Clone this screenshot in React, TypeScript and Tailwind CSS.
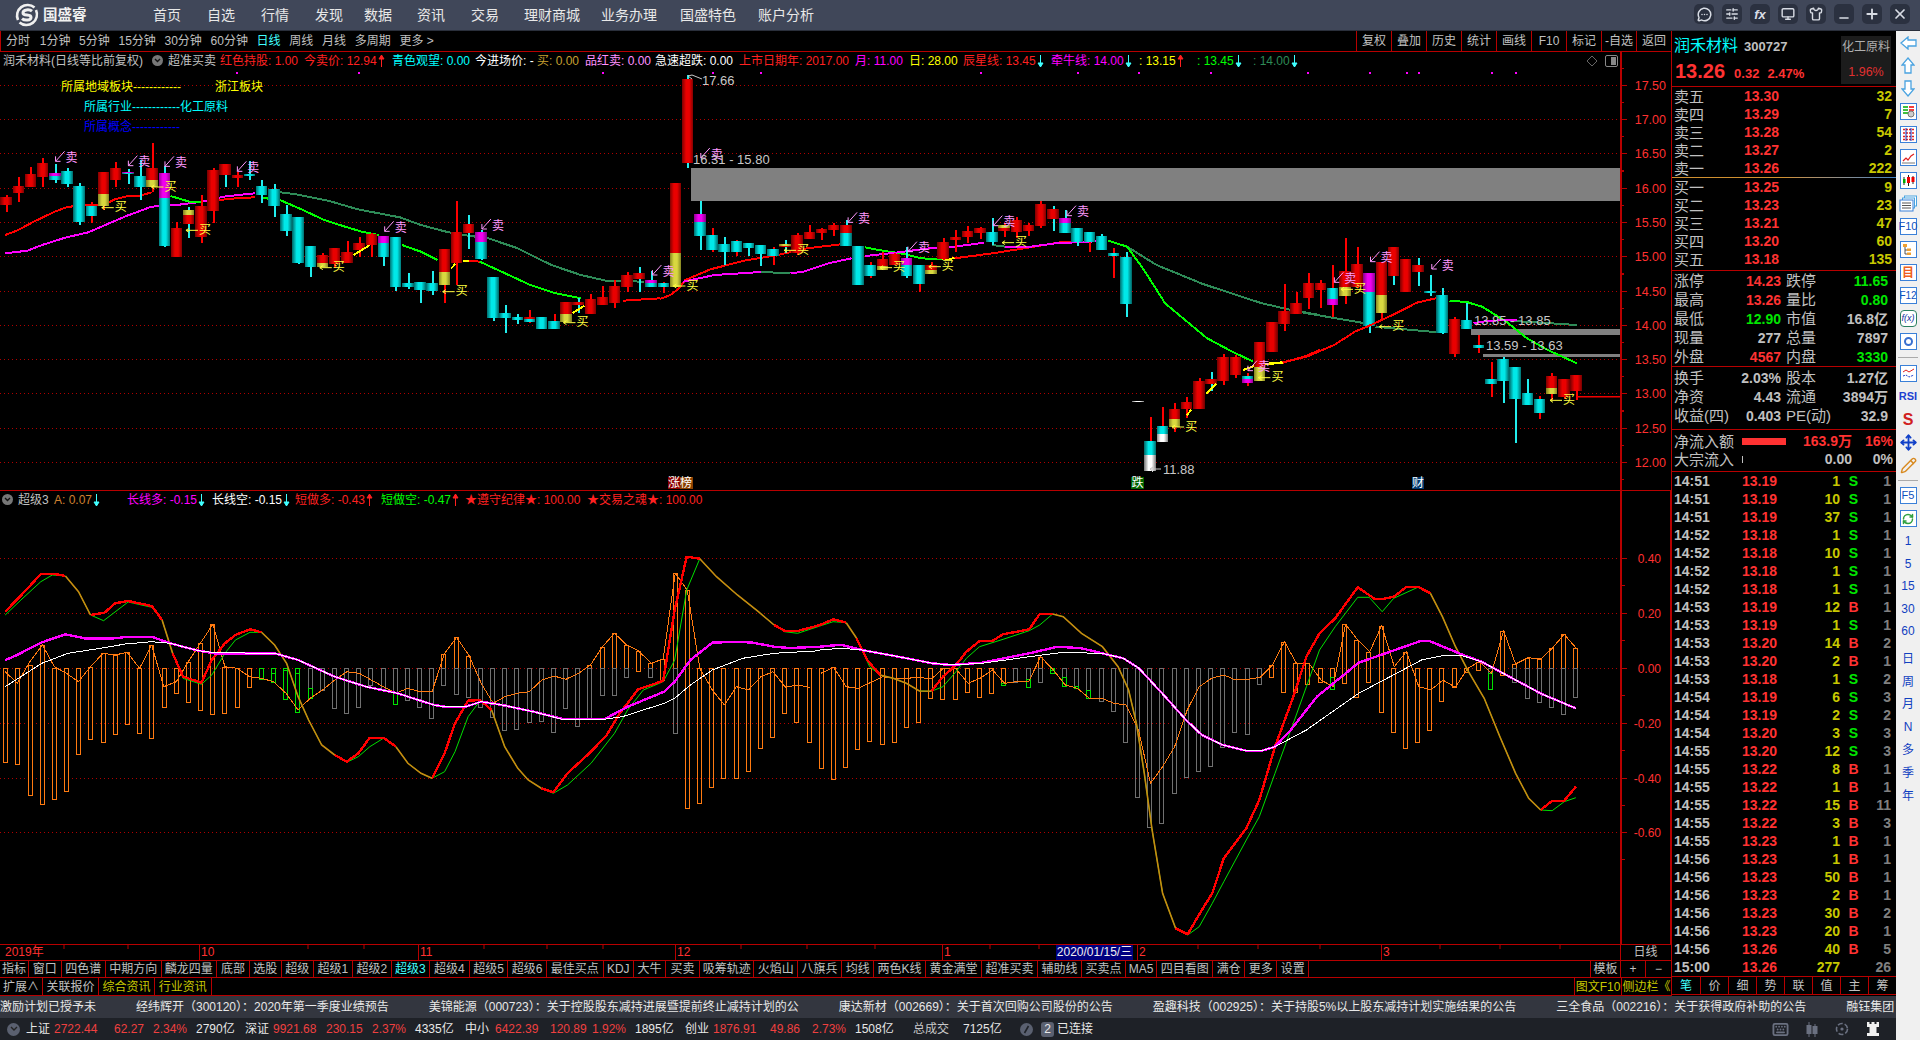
import React from "react";
import { Minus, Plus, X, SlidersHorizontal, Monitor, Shirt, Move, Pencil, RefreshCw, MessageCircleMore, Keyboard } from "lucide-react";

type P = [number, number];
const z8 = (p: P): P => [p[0] / 2.376, 130 + p[1] / 3];
const z9 = (p: P): P => [660 + p[0] / 2.376, 130 + p[1] / 3];
const z10 = (p: P): P => [1100 + p[0] / 2.904, 200 + p[1] / 3];
const z11 = (p: P): P => [p[0] / 1.912, 490 + p[1] / 3];
const z12 = (p: P): P => [820 + p[0] / 1.912, 490 + p[1] / 3];
const pts = (a: P[], f: (p: P) => P) => a.map((p) => f(p).map((v) => v.toFixed(1)).join(",")).join(" ");

type C = [number, number, number, number, string, string?, number?, string?];
const candlesA: C[] = [
  [195,200,225,245,"r"],[140,168,188,215,"r"],[110,132,172,172,"r"],[85,100,140,170,"r"],[102,128,150,160,"m","c",138,"c"],
  [115,122,162,170,"c"],[160,168,276,286,"c"],[215,227,258,278,"c","c",0,"r"],[127,127,228,240,"r","y",192],[97,115,150,170,"r"],
  [117,126,131,162,"m","c",128,"c"],[90,138,172,210,"c"],[40,115,172,185,"r","y",150],[108,128,348,350,"m","c",203,"c"],[275,295,380,380,"r"],
  [232,240,282,325,"y","r",255,"c"],[195,228,320,340,"r"],[115,120,242,280,"r"],[102,102,135,170,"r","r",0,"c"],[125,134,143,170,"r"],
  [93,132,137,150,"c"],[150,167,195,220,"c"],[162,177,228,262,"c"],[225,252,302,317,"c"],[262,262,398,403,"c"],
  [348,348,410,442,"c"],[368,375,412,412,"r","y",398],[355,355,402,415,"r"],[333,367,400,400,"r"],[322,340,360,382,"r"],
  [310,312,345,380,"r"],[318,318,380,408,"m","c",340,"c"],[322,322,470,482,"c"],[430,460,470,476,"c"],[455,456,480,518,"c"],
  [424,460,483,496,"c"],[358,358,465,518,"r","y",426],[213,305,400,465,"r"],[255,282,310,358,"r","r",0,"c"],[300,306,387,390,"m","c",335,"c"],
  [441,441,565,572,"c"],[525,550,563,610,"c"],[552,561,570,582,"c"],[540,562,575,578,"r","c",568,"r"],[561,561,596,596,"c"],
  [552,572,596,596,"c","c",0,"r"],[515,515,575,575,"r","y",552],[505,517,525,550,"r","r",0,"c"],[492,508,552,552,"r"],[468,502,525,525,"r"],
  [450,467,518,535,"r"],[425,434,470,486,"r"],[410,430,446,486,"r","r",0,"c"],[422,450,470,470,"m","c",460,"c"],[455,460,470,490,"c","c",0,"r"],
  [160,160,472,472,"r","y",370],[-165,-153,98,113,"r","r",0,"c"],[213,252,318,360,"m","c",275,"c"],[295,316,360,365,"c","c",0,"r"],[322,342,365,406,"c"],
  [330,332,365,378,"c","c",0,"r"],[340,340,354,378,"c"],[345,345,372,407,"c"],[350,356,378,405,"c","c",0,"r"],[330,342,352,370,"y","r",347,"c"],
  [310,316,368,375,"r"],[285,305,328,328,"r"],[295,298,310,330,"r"],[280,284,300,317,"r"],[270,285,348,348,"r","c",310,"c"],
  [348,348,465,465,"c"],[395,405,438,445,"c","c",0,"r"],[365,388,420,420,"r","y",407],[370,372,405,405,"r"],[350,385,438,443,"m","c",405,"c"],
  [404,404,462,485,"c","c",0,"r"],[397,404,432,432,"r","y",420],[325,337,388,390,"r"],[300,322,330,365,"r"],[287,303,322,340,"r"],
  [290,294,310,328,"r"],[265,306,337,345,"c"],[280,285,302,320,"y","r",295,"r"],[260,270,305,325,"r"],[280,285,303,318,"r"],
  [213,223,288,295,"r"],[228,238,266,302,"r","r",0,"c"],[240,264,308,308,"m","c",280,"c"],[294,294,336,347,"c"],[307,307,336,365,"c","c",0,"r"],
  [312,318,360,360,"c"],[355,370,378,443,"c","c",0,"r"],[365,380,522,562,"c"],[812,812,815,815,"w"],[860,932,1022,1022,"c","w",976,"r"],
  [830,887,936,936,"c","w",912,"r"],[820,838,890,905,"r","y",868,"r"],[800,815,838,865,"r"],[745,752,838,838,"r"],[725,748,762,782,"r","r",0,"c"],
  [672,680,752,765,"r"],[675,680,735,745,"r"],[730,737,758,768,"c","m",748,"r"],[637,637,752,752,"r","y",712],[576,576,666,666,"r"],
  [462,542,582,602,"r"],[485,518,552,552,"r"],[430,460,505,538,"r"],
];
const candlesB: C[] = [
  [240,250,270,325,"r"],[195,263,315,352,"c","m",297,"r"],[115,212,287,313,"r","y",262],[142,193,262,265,"r"],[220,220,378,400,"m","c",275,"c"],
  [185,185,338,358,"r","y",285],[142,142,228,254,"r","r",0,"c"],[176,176,275,275,"r"],[175,196,215,258,"r","r",0,"c"],[225,273,277,288,"c"],
  [265,286,398,403,"c"],[352,356,462,470,"r"],[305,360,386,387,"c"],[405,435,443,460,"c","c",0,"r"],[487,537,551,590,"c","c",0,"r"],
  [472,478,542,608,"c"],[502,502,596,728,"c"],[538,580,614,614,"c"],[587,597,640,658,"c","c",0,"r"],[520,527,582,600,"r","y",564],
  [537,537,592,596,"r"],[526,526,572,600,"r"],
];
const WICK: Record<string, string> = { r: "#f00", c: "#2ee", m: "#2ee", y: "#f00", w: "#ddd" };

function Candles() {
  const all = [...candlesA.map((c) => ({ c, off: 130 })), ...candlesB.map((c) => ({ c, off: 200 }))];
  return (
    <g>
      {all.map(({ c, off }, i) => {
        const [wt, bt, bb, wb, top, bot, split, wick] = c;
        const x = 5.9 + 12.17 * i;
        const y = (z: number) => off + z / 3;
        const mid = bot && split ? split : bb;
        const wc = WICK[wick || top];
        return (
          <g key={i} shapeRendering="crispEdges">
            <rect x={Math.round(x)} y={y(wt)} width={1.5} height={(wb - wt) / 3} fill={wc} />
            <rect x={x - 5.5} y={y(bt)} width={11.5} height={Math.max(1.5, (mid - bt) / 3)} fill={`url(#g${top})`} />
            {bot && split ? <rect x={x - 5.5} y={y(split)} width={11.5} height={(bb - split) / 3} fill={`url(#g${bot})`} /> : null}
          </g>
        );
      })}
    </g>
  );
}

const L = ({ a, f, c, w = 2 }: { a: P[]; f: (p: P) => P; c: string; w?: number }) => (
  <polyline points={pts(a, f)} fill="none" stroke={c} strokeWidth={w} strokeLinejoin="round" shapeRendering="crispEdges" />
);

// The red line runs thick where it leaves the green one; where the two coincide it shows as one thin olive-orange stroke.
function RedGreen({ red, green, f }: { red: P[]; green: P[]; f: (p: P) => P }) {
  const same = new Set(green.map((p) => p.join(",")));
  const isBoth = (a: P, b: P) => same.has(a.join(",")) && same.has(b.join(","));
  const thick: P[][] = [];
  const thin: P[][] = [];
  let cur: P[] = [];
  let curThin: P[] = [];
  for (let i = 0; i < red.length - 1; i++) {
    if (!isBoth(red[i], red[i + 1])) {
      if (!cur.length) cur.push(red[i]);
      cur.push(red[i + 1]);
      if (curThin.length) { thin.push(curThin); curThin = []; }
    } else {
      if (!curThin.length) curThin.push(red[i]);
      curThin.push(red[i + 1]);
      if (cur.length) { thick.push(cur); cur = []; }
    }
  }
  if (cur.length) thick.push(cur);
  if (curThin.length) thin.push(curThin);
  return (
    <g>
      <polyline points={pts(green, f)} fill="none" stroke="#00e000" strokeWidth={1} />
      {thick.map((a, i) => (
        <L key={i} a={a} f={f} c="#ff0000" w={2.4} />
      ))}
      {thin.map((a, i) => (
        <polyline key={i} points={pts(a, f)} fill="none" stroke="#c88a10" strokeWidth={1.6} />
      ))}
    </g>
  );
}

const FONT = "'Liberation Sans','Noto Sans CJK SC',sans-serif";

const sellA: P[] = [[170,82],[343,95],[430,97],[602,112],[952,292],[1183,285]];
const sellB: P[] = [[20,423],[135,72],[485,265],[627,353],[830,275],[1005,245],[1435,710]];
const sellC: P[] = [[727,235],[832,173],[1010,195]];
const buyA: P[] = [[287,230],[405,168],[487,298],[805,410],[1097,482],[1384,575]];
const buyB: P[] = [[77,465],[340,358],[568,410],[684,407],[858,335],[1262,888],[1467,740]];
const buyC: P[] = [[755,265],[866,377],[1362,598]];

const Sell = ({ p }: { p: P }) => (
  <g>
    <path d={`M${p[0] - 7} ${p[1] - 6}L${p[0] - 16} ${p[1] + 4}M${p[0] - 16} ${p[1] + 4}h5M${p[0] - 16} ${p[1] + 4}v-5`} stroke="#ff99ff" fill="none" />
    <text x={p[0]} y={p[1] + 4.5} fontSize={12} textAnchor="middle" fill="#ff99ff">卖</text>
  </g>
);
const Buy = ({ p }: { p: P }) => (
  <g>
    <path d={`M${p[0] - 19} ${p[1] + 1}H${p[0] - 7}M${p[0] - 19} ${p[1] + 1}l3 -2M${p[0] - 19} ${p[1] + 1}l3 2`} stroke="#ffff40" fill="none" />
    <text x={p[0]} y={p[1] + 4.5} fontSize={12} textAnchor="middle" fill="#ffff40">买</text>
  </g>
);

const mainGrid = [85.5, 119.5, 153.5, 188.5, 222.5, 256.5, 291.5, 325.5, 359.5, 393.5, 428.5, 462.5];
const mainLabels = ["17.50", "17.00", "16.50", "16.00", "15.50", "15.00", "14.50", "14.00", "13.50", "13.00", "12.50", "12.00"];

const dots = [236, 358, 602, 712, 760, 980, 1077, 1138, 1210, 1307, 1369, 1406, 1418, 1491, 1515];

function MainChart() {
  return (
    <svg width={1671} height={438} viewBox="0 52 1671 438" className="block" style={{ fontFamily: FONT }}>
      <defs>
        {[["r", "#7a0000", "#ea0000"], ["c", "#006f6f", "#00e8e8"], ["m", "#900090", "#f000f0"], ["y", "#808020", "#d8d840"], ["w", "#808080", "#ffffff"]].map(([k, e, m]) => (
          <linearGradient key={k} id={`g${k}`} x1="0" x2="1" y1="0" y2="0">
            <stop offset="0" stopColor={e} />
            <stop offset="0.36" stopColor={m} />
            <stop offset="0.64" stopColor={m} />
            <stop offset="1" stopColor={e} />
          </linearGradient>
        ))}
      </defs>
      {mainGrid.map((y) => (
        <line key={y} x1={0} x2={1620} y1={y} y2={y} stroke="#b00000" strokeDasharray="1 3" />
      ))}
      {dots.map((x) => (
        <rect key={x} x={x} y={72} width={2} height={2} fill="#ff00ff" />
      ))}
      <rect x={691} y={168} width={929} height={33} fill="#808080" />
      <rect x={1471} y={329} width={149} height={6} fill="#808080" />
      <rect x={1483} y={354} width={137} height={3} fill="#808080" />
      <L f={z9} c="#2e8b57" a={[[1065,332],[1110,350],[1180,405],[1290,462],[1430,520],[1500,540],[1568,555]]} />
      <L f={z8} c="#2e8b57" a={[[665,187],[700,192],[780,212],[850,238],[950,262],[1000,285],[1060,305],[1100,315],[1160,325],[1230,355],[1310,405],[1380,435],[1440,452],[1530,455]]} />
      <L f={z10} c="#2e8b57" a={[[590,338],[770,370]]} />
      <L f={z10} c="#2e8b57" a={[[800,380],[980,397]]} />
      <L f={z10} c="#2e8b57" a={[[1190,362],[1385,375]]} />
      <L f={z8} c="#ff0000" a={[[12,315],[40,302],[80,275],[130,245],[160,231],[200,225],[245,225],[275,207],[305,198],[330,198],[360,187]]} />
      <L f={z8} c="#ff00ff" a={[[12,370],[65,362],[100,345],[155,323],[210,307],[250,285],[300,258],[360,230],[420,225],[480,215],[530,200],[605,190]]} />
      <L f={z8} c="#ff0000" a={[[520,210],[560,205],[605,202]]} />
      <L f={z8} c="#00ff00" a={[[405,198],[450,215],[480,215]]} />
      <L f={z8} c="#00ff00" a={[[620,203],[665,210],[720,240],[770,270],[820,290],[860,305],[900,315]]} />
      <L f={z8} c="#00ff00" a={[[955,345],[1000,365],[1040,390]]} />
      <L f={z8} c="#ffff00" a={[[1100,392],[1115,392]]} />
      <L f={z8} c="#ff0000" a={[[1115,392],[1140,395]]} />
      <L f={z8} c="#00ff00" a={[[1140,395],[1200,430],[1260,465],[1320,490],[1380,505]]} />
      <L f={z8} c="#ff0000" a={[[1480,512],[1568,505]]} />
      <L f={z9} c="#ff0000" a={[[0,507],[25,495],[45,475],[60,450],[120,418],[200,392],[280,375],[350,355],[430,343]]} />
      <L f={z9} c="#ff00ff" a={[[55,455],[130,435],[240,426]]} />
      <L f={z9} c="#2e8b57" a={[[240,426],[310,430]]} />
      <L f={z9} c="#ff00ff" a={[[310,430],[340,425],[400,400],[455,385]]} />
      <L f={z9} c="#00ff00" a={[[487,352],[520,360],[580,372],[620,385],[670,388]]} />
      <L f={z9} c="#ffff00" a={[[670,388],[700,385]]} />
      <L f={z9} c="#ff0000" a={[[700,385],[800,368],[880,352],[960,335],[1000,335]]} />
      <L f={z9} c="#ff00ff" a={[[487,378],[560,368],[640,355],[700,350],[770,338]]} />
      <L f={z9} c="#2e8b57" a={[[790,345],[820,350]]} />
      <L f={z9} c="#ff00ff" a={[[820,350],[880,350],[940,340],[1050,333]]} />
      <L f={z9} c="#00ff00" a={[[1065,332],[1110,350],[1150,420],[1200,520],[1300,625],[1360,665],[1410,695]]} />
      <L f={z9} c="#ffff00" a={[[1385,720],[1420,705],[1480,698]]} />
      <L f={z9} c="#ff0000" a={[[1480,698],[1530,680],[1568,660]]} />
      <Candles />
      <L f={z10} c="#ffff00" a={[[490,490],[530,487]]} />
      <L f={z10} c="#ff0000" a={[[530,487],[600,470],[680,435],[740,395],[780,378],[860,340],[920,308],[975,295]]} />
      <L f={z10} c="#00ff00" a={[[1015,302],[1065,306],[1110,320],[1180,365],[1240,415],[1300,450],[1385,490]]} />
      <L f={z10} c="#ff00ff" a={[[1085,370],[1130,362],[1210,360]]} />
      <L f={z8} c="#ffff00" a={[[840,375],[878,346]]} />
      <L f={z8} c="#ffff00" a={[[1072,415],[1082,402]]} />
      <L f={z8} c="#ffff00" a={[[1360,550],[1388,527]]} />
      <L f={z9} c="#ffff00" a={[[1298,792],[1322,762]]} />
      <L f={z9} c="#ffff00" a={[[1252,855],[1262,840]]} />
      <rect x={1577} y={396} width={43} height={1.5} fill="#f00000" />
      {sellA.map((p, i) => <Sell key={i} p={z8(p)} />)}
      {sellB.map((p, i) => <Sell key={i} p={z9(p)} />)}
      {sellC.map((p, i) => <Sell key={i} p={z10(p)} />)}
      {buyA.map((p, i) => <Buy key={i} p={z8(p)} />)}
      {buyB.map((p, i) => <Buy key={i} p={z9(p)} />)}
      {buyC.map((p, i) => <Buy key={i} p={z10(p)} />)}
      <g fill="#c8c8c8" fontSize={13}>
        <path d="M688 76l4 -1l10 4M688 76l4 3" stroke="#c8c8c8" fill="none" />
        <text x={702} y={84.5}>17.66</text>
        <text x={693} y={164}>16.31 - 15.80</text>
        <text x={1474} y={325}>13.85 - 13.85</text>
        <text x={1486} y={350}>13.59 - 13.63</text>
        <path d="M1150 469h11M1150 469l3 -2M1150 469l3 3" stroke="#c8c8c8" fill="none" />
        <text x={1163} y={474}>11.88</text>
      </g>
      <rect x={668} y={477} width={12} height={12} fill="#8b0000" />
      <rect x={680} y={477} width={13} height={12} fill="#8b4000" />
      <text x={668} y={487} fontSize={12} fill="#fff">涨榜</text>
      <rect x={1131} y={477} width={13} height={12} fill="#006400" />
      <text x={1131.5} y={487} fontSize={12} fill="#fff">跌</text>
      <rect x={1412} y={477} width={12} height={12} fill="#003a70" />
      <text x={1412} y={487} fontSize={12} fill="#fff">财</text>
      <g stroke="#b80000" shapeRendering="crispEdges">
        <rect x={1620} y={52} width={1.5} height={438} fill="#b80000" stroke="none" />
        {mainGrid.map((y) => (
          <g key={y}>
            <line x1={1621} x2={1627} y1={y} y2={y} />
            <line x1={1621} x2={1624} y1={y + 17} y2={y + 17} />
            <line x1={1621} x2={1624} y1={y - 17} y2={y - 17} />
          </g>
        ))}
      </g>
      {mainLabels.map((t, i) => (
        <text key={t} x={1666} y={mainGrid[i] + 4.5} textAnchor="end" fontSize={12.5} fill="#ff3030">{t}</text>
      ))}
      <path d="M1592 56l5 5l-5 5l-5 -5z" fill="none" stroke="#666" />
      <rect x={1605.5} y={55.5} width={12} height={11} rx={1.5} fill="none" stroke="#888" />
      <rect x={1611} y={57} width={5} height={8} fill="#888" />
    </svg>
  );
}

const red1: P[] = [[10,365],[50,300],[78,252],[105,252],[125,258],[150,305],[173,375],[200,368],[220,340],[245,333],[290,348],[310,390],[330,490],[350,560],[385,578],[405,510],[430,460],[450,435],[478,418],[500,427],[525,465],[548,520],[570,620],[590,690],[615,765],[640,795],[663,815],[685,790],[707,743],[733,743],[757,770],[780,820],[805,850],[826,865],[850,790],[870,700],[895,632],[918,630],[940,660],[965,770],[990,835],[1010,870],[1035,895],[1058,907],[1085,850],[1130,785],[1160,735],[1185,670],[1220,598],[1245,585],[1268,572],[1290,360],[1313,200],[1338,206],[1370,260],[1410,315],[1450,365],[1480,405],[1500,422],[1525,423],[1568,405]];
const green1: P[] = [[10,375],[40,330],[78,275],[100,255],[125,258],[150,305],[173,375],[198,392],[245,336],[290,352],[310,390],[330,490],[350,565],[385,583],[405,555],[430,490],[450,450],[478,427],[500,427],[525,465],[548,520],[570,620],[590,690],[615,765],[640,795],[663,817],[685,800],[707,770],[733,745],[757,770],[780,820],[805,850],[826,865],[850,845],[870,785],[895,680],[918,632],[940,660],[965,770],[990,835],[1010,870],[1035,895],[1058,910],[1085,885],[1130,820],[1175,730],[1200,660],[1230,600],[1268,575],[1290,510],[1313,300],[1338,206],[1370,260],[1410,315],[1450,365],[1480,405],[1500,425],[1525,430],[1568,408]];
const red2: P[] = [[0,405],[25,388],[50,398],[70,445],[90,510],[115,555],[140,565],[165,580],[190,603],[213,604],[235,560],[260,525],[280,485],[305,453],[330,452],[350,433],[400,418],[420,372],[445,372],[465,380],[500,430],[540,470],[570,530],[590,600],[605,700],[620,850],[635,1020],[655,1210],[680,1315],[703,1333],[730,1260],[750,1210],[772,1105],[815,1015],[840,930],[870,770],[905,620],[930,500],[955,430],[985,385],[1028,292],[1060,326],[1075,327],[1097,320],[1122,290],[1143,290],[1167,310],[1190,380],[1215,470],[1240,545],[1270,625],[1300,740],[1330,850],[1355,925],[1378,960],[1400,932],[1423,932],[1445,890]];
const green2: P[] = [[0,408],[25,395],[50,398],[70,445],[95,530],[115,555],[140,565],[165,580],[190,603],[213,604],[235,590],[260,545],[280,505],[305,470],[350,448],[400,422],[420,405],[445,372],[465,380],[500,430],[540,470],[570,530],[590,600],[605,700],[620,850],[635,1020],[655,1210],[680,1315],[703,1335],[725,1310],[750,1240],[772,1175],[815,1050],[840,980],[870,850],[905,700],[930,590],[955,480],[985,410],[1028,322],[1050,322],[1075,365],[1097,325],[1143,292],[1167,310],[1190,380],[1215,470],[1240,545],[1270,625],[1300,740],[1330,850],[1355,925],[1378,960],[1400,962],[1423,935],[1445,923]];
const mag1: P[] = [[10,510],[30,497],[78,458],[125,433],[165,446],[220,445],[245,440],[290,440],[325,460],[380,482],[410,490],[525,490],[570,510],[640,560],[700,590],[760,610],[830,645],[850,650],[890,650],[920,635],[960,645],[1020,665],[1075,686],[1155,688],[1200,650],[1270,605],[1290,575],[1320,510],[1362,458],[1410,455],[1440,458],[1480,470],[1510,474],[1568,470]];
const white1: P[] = [[10,590],[40,560],[80,520],[130,490],[180,478],[240,462],[290,455],[325,460],[380,482],[410,488],[525,490],[570,510],[640,560],[700,590],[760,610],[830,645],[850,650],[890,650],[920,635],[960,645],[1020,665],[1075,688],[1155,688],[1190,680],[1270,640],[1290,625],[1320,585],[1362,540],[1420,505],[1480,490],[1568,482]];
const mag2: P[] = [[0,470],[40,464],[80,480],[140,497],[215,520],[250,525],[310,518],[400,490],[455,470],[500,475],[545,492],[580,505],[610,535],[660,620],[700,690],[730,735],[770,765],[815,782],[845,782],[870,770],[900,720],[950,620],[1030,518],[1090,485],[1150,452],[1165,453],[1230,495],[1265,515],[1330,570],[1380,612],[1445,655]];
const white2: P[] = [[0,480],[40,475],[80,480],[140,497],[215,520],[250,525],[310,520],[400,500],[465,487],[530,490],[545,492],[580,505],[610,535],[660,620],[700,690],[730,735],[770,765],[815,782],[845,782],[870,770],[930,720],[1030,610],[1090,560],[1150,510],[1190,497],[1230,498],[1265,515],[1330,570],[1380,612],[1445,655]];
const thin1: P[] = [[10,545],[33,580],[57,515],[81,465],[104,530],[127,550],[150,575],[173,530],[197,490],[220,495],[243,487],[267,535],[290,465],[313,590],[337,575],[360,515],[383,460],[407,403],[430,530],[453,535],[477,560],[500,565],[523,575],[547,610],[570,660],[593,625],[617,600],[640,570],[663,545],[687,550],[710,570],[733,590],[757,610],[780,595],[803,605],[826,605],[850,490],[873,442],[897,497],[920,580],[943,640],[965,620],[989,610],[1012,605],[1036,570],[1059,558],[1082,568],[1106,550],[1129,525],[1152,470],[1175,430],[1198,465],[1221,483],[1245,520],[1268,507],[1291,250],[1314,300],[1338,535],[1362,600],[1385,645],[1408,590],[1431,600],[1455,560],[1478,545],[1502,592],[1525,585],[1548,592]];
const thin2: P[] = [[2,550],[26,532],[50,590],[73,595],[96,578],[120,560],[143,565],[166,565],[190,562],[213,567],[236,535],[259,535],[283,580],[306,565],[330,540],[353,580],[376,575],[399,575],[422,500],[446,540],[469,585],[492,595],[515,625],[539,625],[562,640],[585,645],[609,720],[632,880],[655,830],[678,770],[702,660],[725,590],[749,565],[772,555],[795,570],[818,568],[842,562],[865,525],[888,455],[911,520],[935,520],[958,570],[981,590],[1005,403],[1028,450],[1051,485],[1074,407],[1098,530],[1121,485],[1145,590],[1168,600],[1191,570],[1215,592],[1238,535],[1261,515],[1284,550],[1307,422],[1330,522],[1354,503],[1378,507],[1400,475],[1423,433],[1446,475]];

type B = [number, number, string?, number?];
const bars: B[] = [
  [535,815],[535,823],[525,915],[465,943],[535,928],[535,902],[535,793],[530,748],[490,757],[495,733],[487,703],[535,730],[465,745],[535,652],[535,610],[515,637],[460,660],[403,673],[530,670],[535,652],[535,590],
  [535,567,"g",535],[535,575,"g",548],[535,628,"g",540],[535,665,"g",550],[535,625,"a",595],[535,600,"a"],[535,653,"a"],[535,670,"a"],[535,652,"a"],[535,585,"a"],[535,600,"a"],[535,643,"a",610],[535,630,"a"],[535,652,"a"],[535,685,"a"],
  [492,585,"a"],[442,612,"a"],[497,620,"a"],[535,650,"a"],[535,680,"a"],[535,720,"a"],[535,718,"a"],[535,695,"a"],[535,692,"a"],[535,727,"a"],[535,655,"a"],[535,707,"a"],[525,688,"a"],[470,615,"a"],[430,615,"a"],[465,562,"a"],[483,543],[520,562,"a"],[507,570],[250,730,"a"],[300,955],
  [535,940],[535,892],[535,865],[535,865],[535,842],[535,775],[535,740],[535,670],[535,695],[535,755],
  [535,835],[532,868],[535,832],[535,778],[535,752],[535,763],[535,757],[535,712],[535,695],[535,623],[535,628],[535,628],[535,607],[535,620],[535,610],[535,585,"o",578],[535,575,"a"],[535,590,"a",568],[500,575,"a"],[540,548,"g",540],[535,587,"a",562],[535,595,"a",588],[535,625,"a",600],[535,632,"a"],[535,664,"a"],[535,757,"a"],[535,922,"a"],[535,1010,"a"],[535,1000,"a"],[535,908,"a"],[535,860,"a"],[535,842,"a"],[535,827,"a"],[535,770,"a"],[535,727,"a"],[535,731,"a"],[535,583,"a"],
  [525,562],[455,605],[520,607],[520,583],[535,575],[535,598,"o",562],[403,580],[450,620],[485,575],[407,667],[535,727],[485,775],[535,755],[535,720],[535,632],[535,592],[535,545],[515,540],[535,598,"a",548],[422,555],[522,575,"a"],[503,625,"a"],[507,637,"a"],[475,650,"a"],[433,673,"a"],[475,620,"a"],
];

function Bars() {
  const y = (z: number) => Math.round(490 + z / 3) + 0.5;
  return (
    <g fill="none" shapeRendering="crispEdges">
      {bars.map((b, i) => {
        const x = Math.round(5.3 + 12.17 * i) - 2 + 0.5;
        const [t, e, k, gs] = b;
        if (!k) return <rect key={i} x={x} y={y(t)} width={4} height={y(e) - y(t)} stroke="#ff7a10" />;
        const base = 535;
        return (
          <g key={i}>
            {t < base ? <rect x={x} y={y(t)} width={4} height={y(base) - y(t)} stroke="#ff7a10" /> : null}
            <rect x={x} y={y(base)} width={4} height={y(e) - y(base)} stroke={k === "a" ? "#707070" : k === "g" ? "#00e000" : "#ff7a10"} />
            {gs ? <rect x={x} y={y(gs)} width={4} height={y(e) - y(gs)} stroke="#00e000" /> : null}
          </g>
        );
      })}
    </g>
  );
}

const indGrid = [558.5, 613.5, 668.5, 723.5, 778.5, 832.5];
const indLabels = ["0.40", "0.20", "0.00", "-0.20", "-0.40", "-0.60"];

function IndChart() {
  return (
    <svg width={1671} height={453} viewBox="0 491 1671 453" className="block" style={{ fontFamily: FONT }}>
      {indGrid.map((y) => (
        <line key={y} x1={0} x2={1620} y1={y} y2={y} stroke="#b00000" strokeDasharray="1 3" />
      ))}
      <Bars />
      <L f={z11} c="#ff7a10" w={1} a={thin1} />
      <L f={z12} c="#ff7a10" w={1} a={thin2} />
      <RedGreen red={red1} green={green1} f={z11} />
      <RedGreen red={red2} green={green2} f={z12} />
      <L f={z11} c="#ff00ff" w={2.4} a={mag1} />
      <L f={z12} c="#ff00ff" w={2.4} a={mag2} />
      <L f={z11} c="#ffffff" w={1} a={white1} />
      <L f={z12} c="#ffffff" w={1} a={white2} />
      <g shapeRendering="crispEdges">
        <rect x={1620} y={491} width={2} height={453} fill="#b80000" />
        <rect x={1669.5} y={491} width={1.5} height={453} fill="#b80000" />
        {indGrid.map((y) => (
          <g key={y} stroke="#b80000">
            <line x1={1622} x2={1627} y1={y} y2={y} />
            <line x1={1622} x2={1625} y1={y + 27} y2={y + 27} />
          </g>
        ))}
      </g>
      {indLabels.map((t, i) => (
        <text key={t} x={1661} y={indGrid[i] + 4} textAnchor="end" fontSize={12} fill="#ff3030">{t}</text>
      ))}
    </svg>
  );
}

const Arrow = ({ up, c }: { up?: boolean; c: string }) => (
  <svg width={7} height={14} viewBox="0 0 7 14" className="ml-[1px] shrink-0">
    {up ? <path d="M3.5 13V1M1 5l2.5 -4l2.5 4z" stroke={c} fill={c} /> : <path d="M3.5 1V13M1 9l2.5 4l2.5 -4z" stroke={c} fill={c} />}
  </svg>
);

type Info = { x: number; t: string; c: string; a?: "u" | "d"; ac?: string };
const CY = "#40ffff";
const RD = "#ff2020";
const mainInfo: Info[] = [
  { x: 3, t: "润禾材料(日线等比前复权)", c: "#c0c0c0" },
  { x: 168, t: "超准买卖", c: "#c0c0c0" },
  { x: 220, t: "红色持股: 1.00", c: RD },
  { x: 304, t: "今卖价: 12.94", c: RD, a: "u", ac: RD },
  { x: 392, t: "青色观望: 0.00", c: "#00ffff" },
  { x: 475, t: "今进场价: -", c: "#fff" },
  { x: 537, t: "买: 0.00", c: "#c8a030" },
  { x: 585, t: "品红卖: 0.00", c: "#ff90ff" },
  { x: 655, t: "急速超跌: 0.00", c: "#fff" },
  { x: 739, t: "上市日期年: 2017.00", c: RD },
  { x: 855, t: "月: 11.00", c: "#ff00ff" },
  { x: 909, t: "日: 28.00", c: "#ffff00" },
  { x: 963, t: "辰星线: 13.45", c: RD, a: "d", ac: CY },
  { x: 1051, t: "牵牛线: 14.00", c: "#ff00ff", a: "d", ac: CY },
  { x: 1139, t: ": 13.15", c: "#ffff00", a: "u", ac: RD },
  { x: 1197, t: ": 13.45", c: "#00ff00", a: "d", ac: CY },
  { x: 1253, t: ": 14.00", c: "#2e8b57", a: "d", ac: CY },
  { x: 1330, t: "", c: "#000" },
];
const indInfo: Info[] = [
  { x: 18, t: "超级3", c: "#c0c0c0" },
  { x: 54, t: "A: 0.07", c: "#d08030", a: "d", ac: CY },
  { x: 127, t: "长线多: -0.15", c: "#ff00ff", a: "d", ac: CY },
  { x: 212, t: "长线空: -0.15", c: "#fff", a: "d", ac: CY },
  { x: 295, t: "短做多: -0.43", c: RD, a: "u", ac: RD },
  { x: 381, t: "短做空: -0.47", c: "#00ff00", a: "u", ac: RD },
  { x: 465, t: "★遵守纪律★: 100.00", c: RD },
  { x: 587, t: "★交易之魂★: 100.00", c: RD },
  { x: 705, t: "", c: "#000" },
];

function InfoRow({ items }: { items: Info[] }) {
  return (
    <>
      {items.slice(0, -1).map((it, i) => (
        <div key={i} className="flex items-center whitespace-nowrap shrink-0" style={{ width: items[i + 1].x - it.x, color: it.c }}>
          {it.t}
          {it.a ? <Arrow up={it.a === "u"} c={it.ac || it.c} /> : null}
        </div>
      ))}
    </>
  );
}

const Dot = () => (
  <span className="absolute w-[11px] h-[11px] rounded-full bg-[#777] flex items-center justify-center">
    <svg width={7} height={5} viewBox="0 0 7 5"><path d="M1 1l2.5 2.5L6 1" stroke="#111" strokeWidth={1.4} fill="none" /></svg>
  </span>
);

const tabs: [string, number, string?][] = [
  ["指标",29],["窗口",32.6],["四色谱",44.4],["中期方向",55.6],["麟龙四量",55.4],["底部",33],["选股",31.7],["超级",32.3],["超级1",38.7],["超级2",39.3],["超级3",38,"#40ffff"],["超级4",40],["超级5",38.5],["超级6",38.5],["最佳买点",56.6],["KDJ",30.4],["大牛",32],["买卖",34],["吸筹轨迹",54.5],["火焰山",43.5],["八旗兵",44.4],["均线",32],["两色K线",51.5],["黄金满堂",56.6],["超准买卖",55.4],["辅助线",44.6],["买卖点",43.4],["MA5",31.6],["四目看图",55.8],["满仓",32],["更多",32.2],["设置",31.7],
];

const ticks: [string, string, string, string, string][] = [
  ["14:51","13.19","1","S","1"],["14:51","13.19","10","S","1"],["14:51","13.19","37","S","1"],["14:52","13.18","1","S","1"],["14:52","13.18","10","S","1"],["14:52","13.18","1","S","1"],["14:52","13.18","1","S","1"],
  ["14:53","13.19","12","B","1"],["14:53","13.19","1","S","1"],["14:53","13.20","14","B","2"],["14:53","13.20","2","B","1"],["14:53","13.18","1","S","2"],["14:54","13.19","6","S","3"],["14:54","13.19","2","S","2"],["14:54","13.20","3","S","3"],
  ["14:55","13.20","12","S","3"],["14:55","13.22","8","B","1"],["14:55","13.22","1","B","1"],["14:55","13.22","15","B","11"],["14:55","13.22","3","B","3"],["14:55","13.23","1","B","1"],
  ["14:56","13.23","1","B","1"],["14:56","13.23","50","B","1"],["14:56","13.23","2","B","1"],["14:56","13.23","30","B","2"],["14:56","13.23","20","B","1"],["14:56","13.26","40","B","5"],["15:00","13.26","277","","26"],
];

const Bk = ({ l, p, v }: { l: string; p: string; v: string }) => (
  <div className="h-[18px] flex items-center">
    <span className="w-[72px] pl-[2px] text-[15px] text-[#c0c0c0] leading-none">{l}</span>
    <span className="w-[40px] text-[14px] font-bold text-[#ff3232] leading-none">{p}</span>
    <span className="w-[108px] text-right text-[14px] font-bold text-[#c8c800] leading-none">{v}</span>
  </div>
);

const Stat = ({ l1, v1, c1, l2, v2, c2, h = "h-[19px]" }: { l1: string; v1: string; c1: string; l2: string; v2: string; c2: string; h?: string }) => (
  <div className={`${h} flex items-center font-bold text-[14px] leading-none`}>
    <span className="w-[40px] pl-[2px] text-[15px] font-normal text-[#c0c0c0] whitespace-nowrap">{l1}</span>
    <span className="w-[69px] text-right" style={{ color: c1 }}>{v1}</span>
    <span className="w-[38px] pl-[5px] text-[15px] font-normal text-[#c0c0c0] whitespace-nowrap">{l2}</span>
    <span className="w-[69px] text-right" style={{ color: c2 }}>{v2}</span>
  </div>
);

function Quote() {
  const G = "#c0c0c0", R = "#ff3232", N = "#00e600";
  return (
    <div className="w-[225px] shrink-0 border-l border-[#b80000] flex flex-col">
      <div className="h-[56px] border-b border-[#b80000] relative pt-[5px]">
        <div className="flex items-center pl-[2px] h-[20px]">
          <span className="text-[16px] text-[#00ffff] leading-none">润禾材料</span>
          <span className="ml-[6px] text-[13px] font-bold text-[#c0c0c0] leading-none">300727</span>
        </div>
        <div className="flex items-baseline pl-[3px] mt-[5px] font-bold text-[#ff3232] leading-none">
          <span className="text-[20px]">13.26</span>
          <span className="ml-[9px] text-[13px]">0.32</span>
          <span className="ml-[8px] text-[13px]">2.47%</span>
        </div>
        <div className="absolute left-[169px] top-[5px] w-[50px] h-[48px] bg-[#1c1c1c] flex flex-col items-center pt-[5px]">
          <span className="text-[12px] text-[#b0b0b0] leading-none whitespace-nowrap">化工原料</span>
          <span className="text-[12.5px] text-[#e03030] mt-[13px] leading-none">1.96%</span>
        </div>
      </div>
      <Bk l="卖五" p="13.30" v="32" />
      <Bk l="卖四" p="13.29" v="7" />
      <Bk l="卖三" p="13.28" v="54" />
      <Bk l="卖二" p="13.27" v="2" />
      <Bk l="卖一" p="13.26" v="222" />
      <div className="h-[1px] bg-gradient-to-r from-[#d09030] via-[#d09030] to-[#4080c0]" />
      <Bk l="买一" p="13.25" v="9" />
      <Bk l="买二" p="13.23" v="23" />
      <Bk l="买三" p="13.21" v="47" />
      <Bk l="买四" p="13.20" v="60" />
      <Bk l="买五" p="13.18" v="135" />
      <div className="h-[3px] border-b border-[#b80000]" />
      <div className="border-b border-[#b80000] h-[96px]">
        <Stat l1="涨停" v1="14.23" c1={R} l2="跌停" v2="11.65" c2={N} />
        <Stat l1="最高" v1="13.26" c1={R} l2="量比" v2="0.80" c2={N} />
        <Stat l1="最低" v1="12.90" c1={N} l2="市值" v2="16.8亿" c2={G} />
        <Stat l1="现量" v1="277" c1={G} l2="总量" v2="7897" c2={G} />
        <Stat l1="外盘" v1="4567" c1={R} l2="内盘" v2="3330" c2={N} />
      </div>
      <div className="border-b border-[#b80000] h-[63px] pt-[1px]">
        <Stat l1="换手" v1="2.03%" c1={G} l2="股本" v2="1.27亿" c2={G} />
        <Stat l1="净资" v1="4.43" c1={G} l2="流通" v2="3894万" c2={G} />
        <Stat l1="收益(四)" v1="0.403" c1={G} l2="PE(动)" v2="32.9" c2={G} />
      </div>
      <div className="border-b border-[#b80000] h-[42px] pt-[2px]">
        <div className="h-[18px] flex items-center font-bold text-[14px] leading-none">
          <span className="w-[70px] pl-[2px] text-[15px] font-normal text-[#c0c0c0] whitespace-nowrap">净流入额</span>
          <span className="w-[44px] h-[7px] bg-[#ff3232]" />
          <span className="w-[66px] text-right text-[#ff3232]">163.9万</span>
          <span className="w-[41px] text-right text-[#ff3232]">16%</span>
        </div>
        <div className="h-[18px] flex items-center font-bold text-[14px] leading-none">
          <span className="w-[70px] pl-[2px] text-[15px] font-normal text-[#c0c0c0] whitespace-nowrap">大宗流入</span>
          <span className="w-[44px] h-[7px] border-l border-[#c0c0c0]" />
          <span className="w-[66px] text-right text-[#c0c0c0]">0.00</span>
          <span className="w-[41px] text-right text-[#c0c0c0]">0%</span>
        </div>
      </div>
      <div className="h-[505px] border-b border-[#b80000]">
        {ticks.map((r, i) => (
          <div key={i} className="h-[18px] flex items-center font-bold text-[14px] leading-none">
            <span className="w-[70px] pl-[2px] text-[#c0c0c0]">{r[0]}</span>
            <span className="w-[50px] text-[#ff3232]">{r[1]}</span>
            <span className="w-[48px] text-right text-[#c8c800]">{r[2]}</span>
            <span className={`w-[27px] text-center ${r[3] === "S" ? "text-[#00e600]" : "text-[#ff3232]"}`}>{r[3]}</span>
            <span className="w-[24px] text-right text-[#808080]">{r[4]}</span>
          </div>
        ))}
      </div>
      <div className="h-[18px] flex text-[12px] text-[#c0c0c0] border-b border-[#b80000]">
        {["笔", "价", "细", "势", "联", "值", "主", "筹"].map((t, i) => (
          <span key={t} className={`w-[28px] flex items-center justify-center ${i ? "border-l border-[#b80000]" : "text-[#40ffff]"}`}>{t}</span>
        ))}
      </div>
    </div>
  );
}

const Box = ({ children, c = "border-[#3a80d8]" }: { children: React.ReactNode; c?: string }) => (
  <span className={`w-[17px] h-[17px] border bg-white flex items-center justify-center ${c}`}>{children}</span>
);
const It = ({ children, h = "h-[23px]" }: { children: React.ReactNode; h?: string }) => (
  <div className={`${h} flex items-center justify-center shrink-0`}>{children}</div>
);

function Side() {
  const arrow = "#4aa3e0";
  const sep = <div className="w-[20px] mx-auto h-[1px] bg-[#aaa]" />;
  return (
    <div className="w-[24px] shrink-0 bg-[#f0f0f0] flex flex-col">
      <It><svg width={17} height={14} viewBox="0 0 17 14"><path d="M1 7l7 -6v3h8v6H8v3z" fill="#fff" stroke={arrow} strokeWidth={1.3} /></svg></It>
      <It><svg width={14} height={17} viewBox="0 0 14 17"><path d="M7 1l6 7h-3v8H4V8H1z" fill="#fff" stroke={arrow} strokeWidth={1.3} /></svg></It>
      <It><svg width={14} height={17} viewBox="0 0 14 17"><path d="M7 16l6 -7h-3V1H4v8H1z" fill="#fff" stroke={arrow} strokeWidth={1.3} /></svg></It>
      <It><Box><svg width={13} height={13} viewBox="0 0 13 13"><path d="M1 2h5M1 5h5M1 8h5" stroke="#0a0" strokeWidth={1.3} /><path d="M7 2h5M7 5h5" stroke="#e00" strokeWidth={1.3} /><circle cx={9} cy={9} r={3} fill="#ccc" stroke="#777" /></svg></Box></It>
      <It><Box><svg width={13} height={13} viewBox="0 0 13 13"><path d="M1 1.5h11M1 5h11M1 8.5h11M1 11.5h11" stroke="#e02020" strokeWidth={1.3} strokeDasharray="2 1" /><path d="M4 0v13M9 0v13" stroke="#1030c0" strokeWidth={1} /></svg></Box></It>
      <It><Box><svg width={13} height={13} viewBox="0 0 13 13"><path d="M1 10l3 -3l2 2l3 -4l3 -2" stroke="#e02020" fill="none" strokeWidth={1.2} /><path d="M0 12h13" stroke="#777" /></svg></Box></It>
      <It><Box><svg width={13} height={13} viewBox="0 0 13 13"><path d="M2 3v8M6.5 1v11M11 2v8" stroke="#222" /><rect x={1} y={5} width={2.5} height={4} fill="#0a0" /><rect x={5} y={3} width={3} height={6} fill="#e00" /><rect x={9.5} y={3} width={3} height={5} fill="#e00" /></svg></Box></It>
      <It><svg width={19} height={17} viewBox="0 0 19 17"><rect x={5.5} y={1} width={12} height={10} fill="#fff" stroke={arrow} /><rect x={3.5} y={3} width={12} height={10} fill="#fff" stroke={arrow} /><rect x={1} y={5} width={13} height={11} fill="#fff" stroke="#3a80d8" /><path d="M3 8h9M3 10.5h9M3 13h9" stroke="#555" /></svg></It>
      <It><Box><span className="text-[11px] text-[#1050c0] leading-none">F10</span></Box></It>
      <It><Box><svg width={13} height={13} viewBox="0 0 13 13"><rect x={1} y={1} width={4} height={3} fill="#f0a030" /><rect x={5} y={5.5} width={4} height={2.5} fill="#f0a030" /><rect x={5} y={9.5} width={4} height={2.5} fill="#f0a030" /><path d="M3 4v7h2M3 7h2" stroke="#555" fill="none" /></svg></Box></It>
      <It><Box><span className="text-[12px] font-bold text-[#f06020] leading-none">目</span></Box></It>
      <It><Box><span className="text-[10px] text-[#1050c0] leading-none">F12</span></Box></It>
      <It><span className="w-[17px] h-[17px] rounded-[4px] border border-[#2a8060] bg-white flex items-center justify-center text-[9px] italic text-[#1030a0] leading-none">f(x)</span></It>
      <It><Box><span className="w-[9px] h-[9px] rounded-full border-2 border-[#3a70d0]" /></Box></It>
      <div className="h-[9px] flex items-center shrink-0">{sep}</div>
      <It><Box><svg width={13} height={13} viewBox="0 0 13 13"><path d="M1 5l3 -2l3 2l5 -3" stroke="#e02020" fill="none" /><path d="M1 9l3 -1l3 2l5 -2" stroke="#2040d0" fill="none" strokeDasharray="2 1" /></svg></Box></It>
      <It><span className="text-[11px] font-bold text-[#2040d0] leading-none">RSI</span></It>
      <It><span className="text-[16px] font-bold text-[#d02020] leading-none">S</span></It>
      <It><Move size={17} strokeWidth={2.6} color="#1040c8" /></It>
      <It><Pencil size={17} strokeWidth={2} color="#d88a20" /></It>
      <div className="h-[7px] flex items-center shrink-0">{sep}</div>
      <It><Box><span className="text-[11px] text-[#1050c0] leading-none">F5</span></Box></It>
      <It><Box><RefreshCw size={12} strokeWidth={3} color="#30a040" /></Box></It>
      {["1", "5", "15", "30", "60"].map((t) => (
        <It key={t} h="h-[22.5px]"><span className="text-[12px] text-[#1040c0] leading-none">{t}</span></It>
      ))}
      <div className="h-[5px] shrink-0" />
      {["日", "周", "月", "N", "多", "季", "年"].map((t) => (
        <It key={t} h="h-[22.8px]"><span className="text-[12px] text-[#1040c0] leading-none">{t}</span></It>
      ))}
    </div>
  );
}

const status: [string, string, number][] = [
  ["上证","#e8e8e8",26],["2722.44","#ef4040",54],["62.27","#ef4040",114],["2.34%","#ef4040",153],["2790亿","#e8e8e8",196],
  ["深证","#e8e8e8",245],["9921.68","#ef4040",273],["230.15","#ef4040",326],["2.37%","#ef4040",372],["4335亿","#e8e8e8",415],
  ["中小","#e8e8e8",465],["6422.39","#ef4040",495],["120.89","#ef4040",550],["1.92%","#ef4040",592],["1895亿","#e8e8e8",635],
  ["创业","#e8e8e8",685],["1876.91","#ef4040",713],["49.86","#ef4040",770],["2.73%","#ef4040",812],["1508亿","#e8e8e8",855],
  ["总成交","#c8c8c8",913],["7125亿","#e8e8e8",963],
];

const Win = ({ children }: { children: React.ReactNode }) => (
  <span className="w-[20px] h-[20px] rounded-[5px] bg-[#2b3140] text-[#d8dce4] flex items-center justify-center">{children}</span>
);

export default function App() {
  const bd = "border-[#b80000]";
  return (
    <div className="w-[1920px] h-[1040px] flex flex-col overflow-hidden bg-black text-[12px] text-[#c0c0c0] [font-family:'Liberation_Sans','Noto_Sans_CJK_SC',sans-serif]">
      {/* title bar */}
      <div className="h-[31px] shrink-0 bg-[#404759] border-b border-[#2a2f3b] flex items-center text-[14px] text-[#e8e8e8]">
        <div className="ml-[15px] w-[138px] flex items-center shrink-0">
          <svg width={24} height={24} viewBox="0 0 24 24">
            <path d="M19.5 4.5A10.6 10.6 0 0 0 3 17M4.5 19.5A10.6 10.6 0 0 0 21 7" stroke="#f0f0f0" strokeWidth={2.6} fill="none" />
            <path d="M17 8.2C14.5 6 8 6.4 8 10C8 13.6 16 10.6 16 14.2C16 17.8 9.5 17.8 7 15.6" stroke="#f0f0f0" strokeWidth={3} fill="none" />
          </svg>
          <span className="ml-[4px] text-[14.5px] font-bold text-[#f0f0f0] leading-none">国盛睿</span>
        </div>
        <span>首页</span>
        <span className="ml-[26px]">自选</span>
        <span className="ml-[26px]">行情</span>
        <span className="ml-[26px]">发现</span>
        <span className="ml-[21px]">数据</span>
        <span className="ml-[25px]">资讯</span>
        <span className="ml-[26px]">交易</span>
        <span className="ml-[25px]">理财商城</span>
        <span className="ml-[21px]">业务办理</span>
        <span className="ml-[23px]">国盛特色</span>
        <span className="ml-[22px]">账户分析</span>
        <div className="ml-auto mr-[10px] mb-[2px] flex gap-[8px]">
          <Win><MessageCircleMore size={15} strokeWidth={2.4} /></Win>
          <Win><SlidersHorizontal size={14} strokeWidth={2.4} /></Win>
          <Win><span className="text-[13px] italic font-bold leading-none">fx</span></Win>
          <Win><Monitor size={14} strokeWidth={2.4} /></Win>
          <Win><Shirt size={14} strokeWidth={2.4} /></Win>
          <Win><Minus size={14} strokeWidth={2.4} className="translate-y-[4px]" /></Win>
          <Win><Plus size={16} strokeWidth={2.8} /></Win>
          <Win><X size={16} strokeWidth={2.6} /></Win>
        </div>
      </div>

      <div className="flex flex-1 min-h-0">
        <div className="flex-1 min-w-0 flex flex-col">
          <div className="flex h-[965px] shrink-0">
            {/* chart column */}
            <div className="w-[1671px] shrink-0 flex flex-col">
              <div className={`h-[21px] shrink-0 flex items-center border-b border-l ${bd} pl-[5px] gap-[8.7px] whitespace-nowrap`}>
                <span>分时</span><span className="ml-[1px]">1分钟</span><span>5分钟</span><span>15分钟</span><span>30分钟</span><span>60分钟</span>
                <span className="text-[#40ffff]">日线</span><span>周线</span><span>月线</span><span>多周期</span><span>更多 &gt;</span>
                <div className="ml-auto flex h-full">
                  {["复权", "叠加", "历史", "统计", "画线", "F10", "标记", "-自选", "返回"].map((t) => (
                    <span key={t} className={`w-[35px] flex items-center justify-center border-l ${bd}`}>{t}</span>
                  ))}
                </div>
              </div>

              <div className={`h-[439px] shrink-0 relative border-b ${bd}`}>
                <MainChart />
                <div className="absolute left-0 top-0 h-[18px] flex items-center pl-[3px] whitespace-nowrap">
                  <InfoRow items={mainInfo} />
                </div>
                <div className="absolute left-[152px] top-[3px]"><Dot /></div>
                <div className="absolute left-[61px] top-[27px] text-[12px] leading-[16px] text-[#ffff00] whitespace-nowrap">所属地域板块------------<span className="ml-[34px]">浙江板块</span></div>
                <div className="absolute left-[84px] top-[47px] text-[12px] leading-[16px] text-[#00ffff] whitespace-nowrap">所属行业------------化工原料</div>
                <div className="absolute left-[84px] top-[67px] text-[12px] leading-[16px] text-[#0000ff] whitespace-nowrap">所属概念------------</div>
              </div>

              <div className={`h-[454px] shrink-0 relative border-b ${bd}`}>
                <IndChart />
                <div className="absolute left-0 top-0 h-[17px] flex items-center pl-[18px] whitespace-nowrap">
                  <InfoRow items={indInfo} />
                </div>
                <div className="absolute left-[2px] top-[3px]"><Dot /></div>
              </div>

              <div className={`h-[16px] shrink-0 flex relative border-b ${bd} text-[#ff3030] leading-[15px]`}>
                <span className="w-[199px] pl-[5px]">2019年</span>
                <span className={`w-[219px] pl-[1px] border-l ${bd}`}>10</span>
                <span className={`w-[257px] pl-[1px] border-l ${bd}`}>11</span>
                <span className={`w-[267px] pl-[1px] border-l ${bd}`}>12</span>
                <span className={`w-[114px] pl-[1px] border-l ${bd}`}>1</span>
                <span className="w-[77px] bg-[#000080] text-[#f0f0f0] text-center whitespace-nowrap">2020/01/15/三</span>
                <span className="w-[4px]" />
                <span className={`w-[244px] pl-[1px] border-l ${bd}`}>2</span>
                <span className={`w-[239px] pl-[1px] border-l ${bd}`}>3</span>
                <span className={`w-[50px] text-center text-[#c0c0c0] border-l ${bd}`}>日线</span>
                <svg width={1620} height={4} className="absolute left-0 top-0">
                  {[64, 128, 308, 364, 484, 547, 603, 741, 807, 875, 990, 1039, 1198, 1258, 1320, 1440, 1500, 1560].map((x) => (
                    <line key={x} x1={x} x2={x} y1={0} y2={4} stroke="#b80000" />
                  ))}
                </svg>
              </div>

              <div className={`h-[17px] shrink-0 flex border-b ${bd} whitespace-nowrap`}>
                {tabs.map(([t, w, c]) => (
                  <span key={t} className={`flex items-center justify-center border-r ${bd} shrink-0`} style={{ width: w, color: c }}>{t}</span>
                ))}
                <span className={`ml-auto w-[31px] flex items-center justify-center border-x ${bd}`}>模板</span>
                <span className={`w-[25px] flex items-center justify-center border-r ${bd}`}>+</span>
                <span className="w-[25px] flex items-center justify-center">−</span>
              </div>

              <div className={`h-[18px] shrink-0 flex border-b ${bd} whitespace-nowrap`}>
                <span className={`w-[43px] flex items-center justify-center border-r ${bd}`}>扩展∧</span>
                <span className={`w-[56px] flex items-center justify-center border-r ${bd}`}>关联报价</span>
                <span className={`w-[56px] flex items-center justify-center border-r ${bd} text-[#c8c800]`}>综合资讯</span>
                <span className={`w-[56.6px] flex items-center justify-center border-r ${bd} text-[#c8c800]`}>行业资讯</span>
                <span className={`ml-auto w-[47px] flex items-center justify-center border-l ${bd} text-[#c8c800]`}>图文F10</span>
                <span className={`w-[50px] flex items-center justify-center border-l ${bd} text-[#c8c800]`}>侧边栏《</span>
              </div>
            </div>
            <Quote />
          </div>

          {/* ticker */}
          <div className="h-[22px] shrink-0 bg-[#33363f] text-[#e8e8e8] flex items-center gap-[40px] whitespace-nowrap overflow-hidden">
            <span className="w-[96px] shrink-0 overflow-hidden">激励计划已授予未</span>
            <span>经纬辉开（300120）：2020年第一季度业绩预告</span>
            <span>美锦能源（000723）：关于控股股东减持进展暨提前终止减持计划的公</span>
            <span>康达新材（002669）：关于首次回购公司股份的公告</span>
            <span>盈趣科技（002925）：关于持股5%以上股东减持计划实施结果的公告</span>
            <span>三全食品（002216）：关于获得政府补助的公告</span>
            <span>融钰集团</span>
          </div>

          {/* status */}
          <div className="h-[22px] shrink-0 bg-[#1e2127] flex items-center whitespace-nowrap">
            <span className="ml-[7px] w-[13px] h-[13px] rounded-full bg-[#5a6070] flex items-center justify-center shrink-0">
              <svg width={8} height={6} viewBox="0 0 8 6"><path d="M1 1l3 3l3 -3" stroke="#222" strokeWidth={1.4} fill="none" /></svg>
            </span>
            <span className="w-[6px] shrink-0" />
            {status.map(([t, c, x], i) => (
              <span key={i} className="shrink-0" style={{ width: (i + 1 < status.length ? status[i + 1][2] : x + 57) - x, color: c }}>{t}</span>
            ))}
            <span className="w-[13px] h-[13px] rounded-full bg-[#5a6070] flex items-center justify-center shrink-0">
              <svg width={7} height={9} viewBox="0 0 7 9"><path d="M5.5 1L1.5 8" stroke="#1e2127" strokeWidth={1.6} /></svg>
            </span>
            <span className="ml-[8px] w-[13px] h-[15px] rounded-[3px] bg-[#5a6070] text-[#e8e8e8] text-center leading-[15px] shrink-0">2</span>
            <span className="ml-[3px] text-[#e8e8e8]">已连接</span>
            <div className="ml-auto mr-[16px] flex items-center gap-[17px]">
              <Keyboard size={17} strokeWidth={2.6} color="#6a7080" />
              <svg width={12} height={15} viewBox="0 0 12 15"><path d="M3 0v15M9 2v13" stroke="#6a7080" /><rect x={0.5} y={3} width={5} height={9} fill="#6a7080" /><rect x={6.5} y={4} width={5} height={8} fill="#6a7080" /></svg>
              <svg width={14} height={14} viewBox="0 0 14 14"><circle cx={7} cy={7} r={5.5} stroke="#6a7080" strokeWidth={1.6} fill="none" strokeDasharray="5 2" /><circle cx={7} cy={7} r={1.6} fill="#6a7080" /></svg>
              <svg width={14} height={14} viewBox="0 0 14 14"><path d="M1 0h2.5v2h2V0h3v2h2V0H13v5h-2.5v6H13v3H1v-3h2.5V5H1z" fill="#f0f0f0" /></svg>
            </div>
          </div>
        </div>
        <Side />
      </div>
    </div>
  );
}
